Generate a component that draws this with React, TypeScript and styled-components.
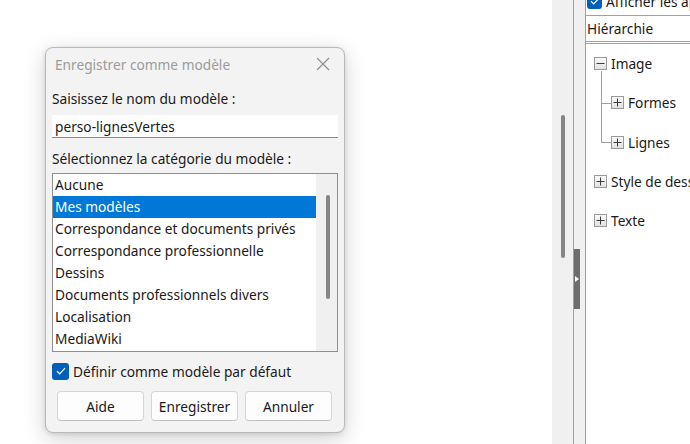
import React from 'react'
import styled, { createGlobalStyle } from 'styled-components'

const GlobalStyle = createGlobalStyle`
  html, body {
    margin: 0;
    padding: 0;
    background: #ffffff;
    overflow: hidden;
  }
  body {
    font-family: 'Noto Sans', 'Open Sans', sans-serif;
    font-size: 13.7px;
    color: #1a1a1a;
  }
`

const Page = styled.div`
  position: relative;
  display: flex;
  width: 690px;
  height: 444px;
  overflow: hidden;
`

const Canvas = styled.div`
  flex: 1;
  background: #ffffff;
`

const ScrollStrip = styled.div`
  width: 21px;
  background: #f0f0f0;
  border-right: 1px solid #a0a0a0;
`

const ScrollThumb = styled.div`
  width: 4px;
  height: 143px;
  margin: 115px 0 0 9px;
  border-radius: 2px;
  background: #858585;
`

const CollapseStrip = styled.div`
  width: 11px;
  background: #f0f0f0;
`

const CollapseHandle = styled.div`
  width: 6px;
  height: 60px;
  margin-top: 249px;
  background: #6d6d6d;
  display: flex;
  align-items: center;
  justify-content: center;

  &::after {
    content: '';
    border-left: 4px solid #ffffff;
    border-top: 3px solid transparent;
    border-bottom: 3px solid transparent;
  }
`

const SidePanel = styled.div`
  width: 104px;
  border-left: 1px solid #a0a0a0;
  display: flex;
  flex-direction: column;
  white-space: nowrap;
  overflow: hidden;
`

const ShowRow = styled.div`
  display: flex;
  align-items: center;
  gap: 4px;
  height: 26px;
  margin-top: -12px;
  padding-left: 1px;
`

const Combo = styled.div`
  height: 25px;
  margin-top: 1px;
  border-top: 1px solid #a0a0a0;
  border-bottom: 1px solid #a0a0a0;
  display: flex;
  align-items: center;
  padding-left: 1px;
`

const Tree = styled.div`
  flex: 1;
  margin-top: 1px;
  border-top: 1px solid #a0a0a0;
  padding: 0 0 0 8px;
`

const TreeRow = styled.div<{ $level: number }>`
  position: relative;
  display: flex;
  align-items: center;
  gap: 4px;
  height: 39.3px;
  padding-left: ${(p) => p.$level * 17}px;
`

const Connector = styled.div<{ $tall: boolean }>`
  position: absolute;
  left: 7px;
  bottom: 19px;
  width: 9px;
  height: ${(p) => (p.$tall ? 32 : 40)}px;
  border-left: 1px solid #a0a0a0;
  border-bottom: 1px solid #a0a0a0;
`

const ExpandBox = styled.span`
  display: inline-flex;
  align-items: center;
  justify-content: center;
  width: 11px;
  height: 11px;
  border: 1px solid #9a9a9a;
  background: linear-gradient(#fafafa, #e2e2e2);
  flex-shrink: 0;
`

const Dialog = styled.div`
  position: absolute;
  left: 45px;
  top: 47px;
  width: 300px;
  height: 386px;
  box-sizing: border-box;
  background: #f3f3f3;
  border: 1px solid #b9b9b9;
  border-radius: 8px;
  box-shadow: 0 6px 22px rgba(0, 0, 0, 0.18), 0 1px 4px rgba(0, 0, 0, 0.12);
  display: flex;
  flex-direction: column;
  padding: 0 6px;
`

const TitleBar = styled.div`
  display: flex;
  align-items: center;
  justify-content: space-between;
  height: 32px;
  padding: 0 8px 0 3px;
  color: #9b9b9b;
`

const Label = styled.div<{ $top: number }>`
  margin-top: ${(p) => p.$top}px;
  height: 20px;
  line-height: 20px;
`

const NameInput = styled.div`
  margin-top: 6px;
  height: 22px;
  background: #ffffff;
  border-bottom: 1px solid #8a8a8a;
  display: flex;
  align-items: center;
  padding-left: 3px;
`

const ListBox = styled.div`
  display: flex;
  margin-top: 4px;
  height: 179px;
  box-sizing: border-box;
  border: 1px solid #8f8f8f;
  background: #ffffff;
`

const ListItems = styled.div`
  flex: 1;
  overflow: hidden;
`

const ListItem = styled.div<{ $selected?: boolean }>`
  height: 22px;
  line-height: 22px;
  padding-left: 2px;
  white-space: nowrap;
  background: ${(p) => (p.$selected ? '#0078d7' : 'transparent')};
  color: ${(p) => (p.$selected ? '#ffffff' : '#1a1a1a')};
`

const ListScroll = styled.div`
  width: 21px;
  background: #f0f0f0;
  display: flex;
  justify-content: center;
`

const ListThumb = styled.div`
  width: 4px;
  height: 104px;
  margin-top: 21px;
  margin-left: 2px;
  border-radius: 2px;
  background: #858585;
`

const CheckRow = styled.div`
  display: flex;
  align-items: center;
  gap: 4px;
  margin-top: 10px;
  height: 18px;
`

const CheckBox = styled.span<{ $size: number }>`
  display: inline-flex;
  align-items: center;
  justify-content: center;
  width: ${(p) => p.$size}px;
  height: ${(p) => p.$size}px;
  border-radius: 3px;
  background: #005fb8;
  flex-shrink: 0;
`

const ButtonRow = styled.div`
  display: flex;
  gap: 7px;
  margin-top: 11px;
  padding-left: 5px;
`

const Button = styled.button`
  width: 87px;
  height: 30px;
  background: #fdfdfd;
  border: 1px solid #d5d5d5;
  border-bottom-color: #c2c2c2;
  border-radius: 4px;
  font-family: inherit;
  font-size: 13.7px;
  color: #1a1a1a;
  padding: 0;
`

const Check = () => (
  <svg width="10" height="8" viewBox="0 0 10 8">
    <path d="M1 4.2 L3.7 6.8 L9 1.2" fill="none" stroke="#ffffff" strokeWidth="1.2" />
  </svg>
)

const Sign = ({ plus }: { plus: boolean }) => (
  <svg width="9" height="9" viewBox="0 0 9 9">
    <path d="M0.5 4.5 H8.5" stroke="#3c3c3c" strokeWidth="1" />
    {plus && <path d="M4.5 0.5 V8.5" stroke="#3c3c3c" strokeWidth="1" />}
  </svg>
)

const categories = [
  'Aucune',
  'Mes modèles',
  'Correspondance et documents privés',
  'Correspondance professionnelle',
  'Dessins',
  'Documents professionnels divers',
  'Localisation',
  'MediaWiki',
]

export default function App() {
  return (
    <Page>
      <GlobalStyle />
      <Canvas />
      <ScrollStrip>
        <ScrollThumb />
      </ScrollStrip>
      <CollapseStrip>
        <CollapseHandle />
      </CollapseStrip>
      <SidePanel>
        <ShowRow>
          <CheckBox $size={15}>
            <Check />
          </CheckBox>
          Afficher les aperçus
        </ShowRow>
        <Combo>Hiérarchie</Combo>
        <Tree>
          <TreeRow $level={0}>
            <ExpandBox>
              <Sign plus={false} />
            </ExpandBox>
            Image
          </TreeRow>
          <TreeRow $level={1}>
            <Connector $tall />
            <ExpandBox>
              <Sign plus />
            </ExpandBox>
            Formes
          </TreeRow>
          <TreeRow $level={1}>
            <Connector $tall={false} />
            <ExpandBox>
              <Sign plus />
            </ExpandBox>
            Lignes
          </TreeRow>
          <TreeRow $level={0}>
            <ExpandBox>
              <Sign plus />
            </ExpandBox>
            Style de dessin
          </TreeRow>
          <TreeRow $level={0}>
            <ExpandBox>
              <Sign plus />
            </ExpandBox>
            Texte
          </TreeRow>
        </Tree>
      </SidePanel>

      <Dialog>
        <TitleBar>
          Enregistrer comme modèle
          <svg width="14" height="14" viewBox="0 0 14 14">
            <path d="M1 1 L13 13 M13 1 L1 13" stroke="#8c8c8c" strokeWidth="1.1" />
          </svg>
        </TitleBar>
        <Label $top={9}>Saisissez le nom du modèle :</Label>
        <NameInput>perso-lignesVertes</NameInput>
        <Label $top={11}>Sélectionnez la catégorie du modèle :</Label>
        <ListBox>
          <ListItems>
            {categories.map((c, i) => (
              <ListItem key={c} $selected={i === 1}>
                {c}
              </ListItem>
            ))}
          </ListItems>
          <ListScroll>
            <ListThumb />
          </ListScroll>
        </ListBox>
        <CheckRow>
          <CheckBox $size={17}>
            <Check />
          </CheckBox>
          Définir comme modèle par défaut
        </CheckRow>
        <ButtonRow>
          <Button>Aide</Button>
          <Button>Enregistrer</Button>
          <Button>Annuler</Button>
        </ButtonRow>
      </Dialog>
    </Page>
  )
}
